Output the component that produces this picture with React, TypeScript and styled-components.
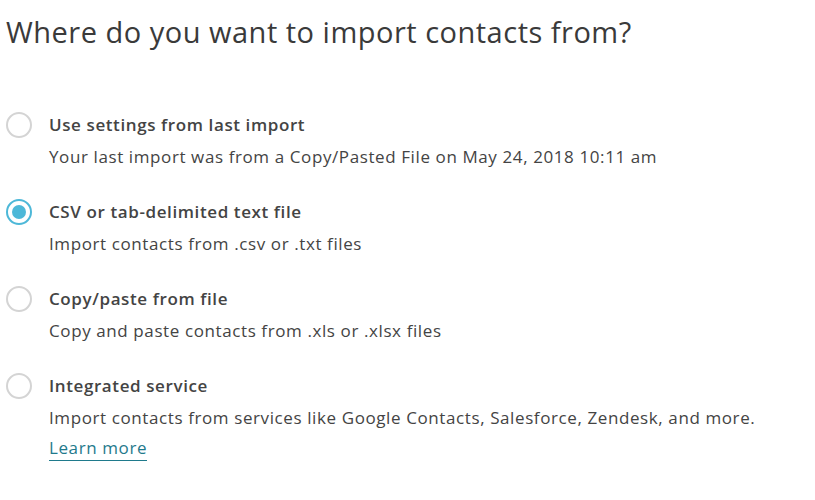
import { createGlobalStyle } from "styled-components";
import styled from "styled-components";

const GlobalStyle = createGlobalStyle`
  body {
    margin: 0;
    background: #fff;
    font-family: "Open Sans", "Noto Sans", sans-serif;
    color: #444;
  }
`;

const Page = styled.div`
  padding: 12px 0 0 6px;
`;

const Heading = styled.h1`
  margin: 0;
  font-size: 29px;
  line-height: 40px;
  font-weight: 400;
  letter-spacing: 0.5px;
  color: #3a3a3a;
`;

const OptionList = styled.div`
  display: flex;
  flex-direction: column;
  gap: 24px;
  margin-top: 58px;
`;

const Option = styled.label`
  display: grid;
  grid-template-columns: 26px 1fr;
  column-gap: 17px;
  align-items: start;
  cursor: pointer;
`;

const Radio = styled.span<{ $checked?: boolean }>`
  width: 26px;
  height: 26px;
  margin-top: 2px;
  box-sizing: border-box;
  border-radius: 50%;
  border: 2px solid ${(p) => (p.$checked ? "#4db8d8" : "#d4d4d4")};
  display: flex;
  align-items: center;
  justify-content: center;

  &::after {
    content: "";
    display: ${(p) => (p.$checked ? "block" : "none")};
    width: 14px;
    height: 14px;
    border-radius: 50%;
    background: #4db8d8;
  }
`;

const Body = styled.div`
  display: flex;
  flex-direction: column;
  letter-spacing: 0.6px;
`;

const Title = styled.span`
  font-size: 17px;
  line-height: 30px;
  font-weight: 600;
  color: #444;
`;

const Description = styled.span`
  margin-top: 1px;
  font-size: 17px;
  line-height: 32px;
  color: #444;
`;

const LearnMore = styled.a`
  align-self: flex-start;
  margin-top: 2px;
  font-size: 17px;
  line-height: 24px;
  color: #1f7a8c;
  text-decoration: none;
  border-bottom: 1px solid #1f7a8c;
`;

const options = [
  {
    title: "Use settings from last import",
    description:
      "Your last import was from a Copy/Pasted File on May 24, 2018 10:11 am",
  },
  {
    title: "CSV or tab-delimited text file",
    description: "Import contacts from .csv or .txt files",
    checked: true,
  },
  {
    title: "Copy/paste from file",
    description: "Copy and paste contacts from .xls or .xlsx files",
  },
  {
    title: "Integrated service",
    description:
      "Import contacts from services like Google Contacts, Salesforce, Zendesk, and more.",
    learnMore: true,
  },
];

const App = () => {
  return (
    <>
      <GlobalStyle />
      <Page>
        <Heading>Where do you want to import contacts from?</Heading>
        <OptionList>
          {options.map((o) => (
            <Option key={o.title}>
              <Radio $checked={o.checked} />
              <Body>
                <Title>{o.title}</Title>
                <Description>{o.description}</Description>
                {o.learnMore && <LearnMore href="#">Learn more</LearnMore>}
              </Body>
            </Option>
          ))}
        </OptionList>
      </Page>
    </>
  );
};

export default App;
